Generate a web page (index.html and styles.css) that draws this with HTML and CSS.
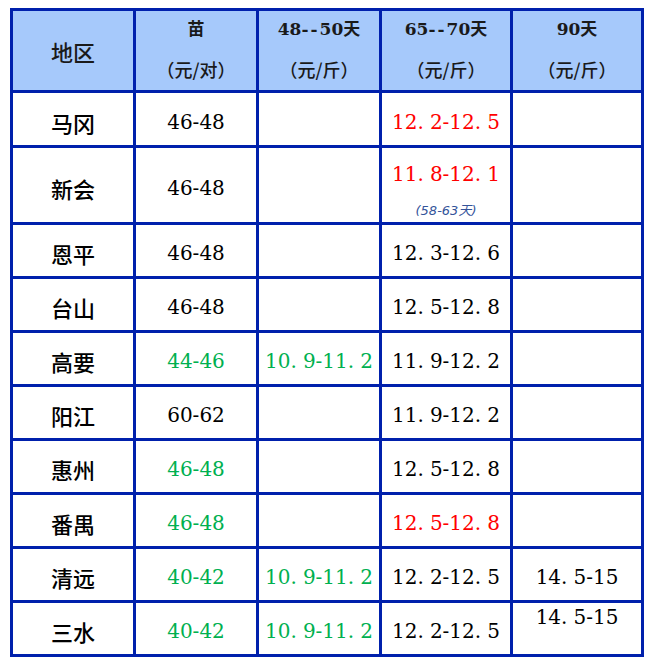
FILE: index.html
```html
<!DOCTYPE html>
<html lang="zh">
<head>
<meta charset="utf-8">
<link rel="stylesheet" href="styles.css">
</head>
<body>
<table class="price">
  <colgroup>
    <col class="c1"><col class="c2"><col class="c3"><col class="c4"><col class="c5">
  </colgroup>
  <tr class="head">
    <th class="region">地区</th>
    <th><div class="t1">苗</div><div class="t2">（元/对）</div></th>
    <th><div class="t1">48<span class="hy">--</span>50天</div><div class="t2">（元/斤）</div></th>
    <th><div class="t1">65<span class="hy">--</span>70天</div><div class="t2">（元/斤）</div></th>
    <th><div class="t1">90天</div><div class="t2">（元/斤）</div></th>
  </tr>
  <tr class="r1">
    <td class="name">马冈</td><td>46-48</td><td></td><td class="red">12<span class="d">.</span>2-12<span class="d">.</span>5</td><td></td>
  </tr>
  <tr class="r2">
    <td class="name">新会</td><td>46-48</td><td></td>
    <td class="top"><div class="main red">11<span class="d">.</span>8-12<span class="d">.</span>1</div><div class="note">(58-63天)</div></td><td></td>
  </tr>
  <tr class="rn">
    <td class="name">恩平</td><td>46-48</td><td></td><td>12<span class="d">.</span>3-12<span class="d">.</span>6</td><td></td>
  </tr>
  <tr class="rn">
    <td class="name">台山</td><td>46-48</td><td></td><td>12<span class="d">.</span>5-12<span class="d">.</span>8</td><td></td>
  </tr>
  <tr class="rn">
    <td class="name">高要</td><td class="green">44-46</td><td class="green">10<span class="d">.</span>9-11<span class="d">.</span>2</td><td>11<span class="d">.</span>9-12<span class="d">.</span>2</td><td></td>
  </tr>
  <tr class="rn">
    <td class="name">阳江</td><td>60-62</td><td></td><td>11<span class="d">.</span>9-12<span class="d">.</span>2</td><td></td>
  </tr>
  <tr class="rn">
    <td class="name">惠州</td><td class="green">46-48</td><td></td><td>12<span class="d">.</span>5-12<span class="d">.</span>8</td><td></td>
  </tr>
  <tr class="rn">
    <td class="name">番禺</td><td class="green">46-48</td><td></td><td class="red">12<span class="d">.</span>5-12<span class="d">.</span>8</td><td></td>
  </tr>
  <tr class="rn">
    <td class="name">清远</td><td class="green">40-42</td><td class="green">10<span class="d">.</span>9-11<span class="d">.</span>2</td><td>12<span class="d">.</span>2-12<span class="d">.</span>5</td><td>14<span class="d">.</span>5-15</td>
  </tr>
  <tr class="rn">
    <td class="name">三水</td><td class="green">40-42</td><td class="green">10<span class="d">.</span>9-11<span class="d">.</span>2</td><td>12<span class="d">.</span>2-12<span class="d">.</span>5</td><td class="top"><div class="topline">14<span class="d">.</span>5-15</div></td>
  </tr>
</table>
</body>
</html>
```

FILE: styles.css
```css
html, body {
  margin: 0;
  padding: 0;
  background: #ffffff;
}

.price {
  margin: 8px 0 0 10px;
  border-collapse: collapse;
  table-layout: fixed;
  width: 633px;
  font-family: "DejaVu Serif", "Noto Sans CJK SC", serif;
  font-size: 20px;
  color: #000000;
}

.c1, .c2, .c3 { width: 123px; }
.c4, .c5 { width: 131px; }

.price th,
.price td {
  border: 3px solid #0020ac;
  padding: 0;
  text-align: center;
  vertical-align: middle;
  white-space: nowrap;
}

.price td {
  padding-top: 5px;
}

.head th {
  background: #a6c9fb;
  height: 79px;
  color: #1a1a1a;
}

.t1 {
  font-family: "DejaVu Serif", "Noto Sans CJK SC", serif;
  font-weight: 700;
  font-size: 17px;
  line-height: 37px;
}

.hy { letter-spacing: 2px; }

.t2 {
  font-family: "Noto Sans CJK SC", sans-serif;
  font-weight: 500;
  font-size: 18px;
  line-height: 42px;
}

.region {
  font-family: "Noto Sans CJK SC", sans-serif;
  font-weight: 500;
  font-size: 22px;
}

.name {
  font-family: "Noto Sans CJK SC", sans-serif;
  font-weight: 500;
  font-size: 22px;
}

.r1 td { height: 47px; }
.r2 td { height: 69px; }
.rn td { height: 46px; }

.d { margin-right: 0.3em; }

.red { color: #ff0000; }
.green { color: #00b050; }

.price td.top {
  vertical-align: top;
  padding-top: 0;
}

.r2 td.top { height: 74px; }
.rn td.top { height: 51px; }

.main {
  padding-top: 6px;
  line-height: 40px;
}

.note {
  margin-top: 7px;
  font-family: "DejaVu Sans", "Noto Sans CJK SC", sans-serif;
  font-style: italic;
  font-size: 13px;
  line-height: 20px;
  color: #34549a;
}

.topline {
  line-height: 28px;
}
```
